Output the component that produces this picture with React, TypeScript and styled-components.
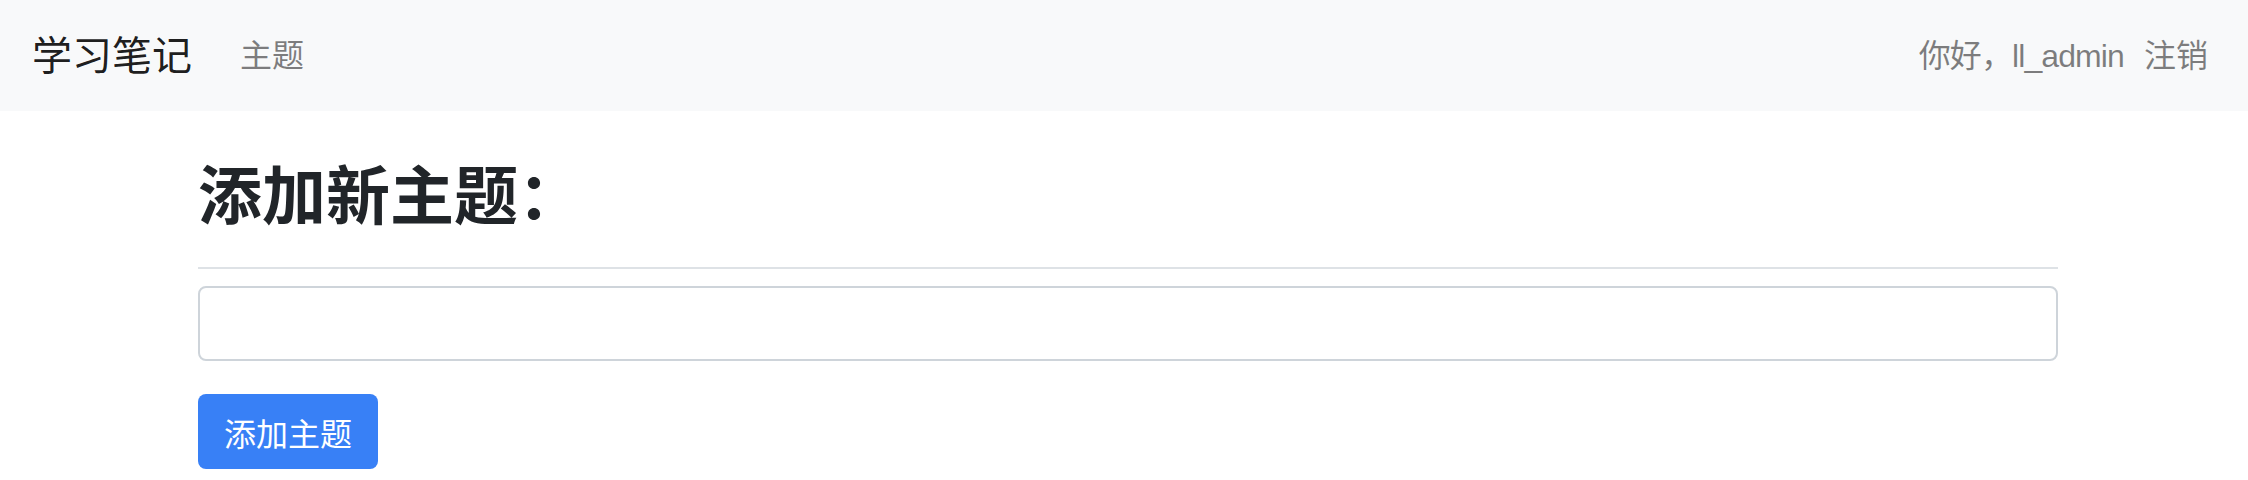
import styled, { createGlobalStyle } from 'styled-components';

const GlobalStyle = createGlobalStyle`
  body {
    margin: 0;
    background: #fff;
    font-family: "Liberation Sans", "Noto Sans CJK SC", sans-serif;
    color: #212529;
  }
`;

const Navbar = styled.nav`
  height: 111px;
  background: #f8f9fa;
  display: flex;
  align-items: center;
  padding: 0 40px 0 32px;
  box-sizing: border-box;
`;

const Brand = styled.a`
  font-size: 40px;
  line-height: 60px;
  color: rgba(0, 0, 0, 0.9);
  text-decoration: none;
  margin-right: 48px;
`;

const NavLinks = styled.div<{ $right?: boolean }>`
  display: flex;
  align-items: center;
  gap: 20px;
  margin-left: ${(p) => (p.$right ? 'auto' : '0')};
`;

const NavItem = styled.a<{ $tight?: boolean }>`
  font-size: 32px;
  line-height: 48px;
  color: rgba(0, 0, 0, 0.5);
  text-decoration: none;
  letter-spacing: ${(p) => (p.$tight ? '-0.9px' : '0')};
`;

const Container = styled.main`
  width: 1860px;
  margin-left: 198px;
  padding-top: 48px;
`;

const Heading = styled.h2`
  margin: 0;
  font-size: 64px;
  line-height: 77px;
  font-weight: 700;
  color: #212529;
`;

const Divider = styled.hr`
  margin: 31px 0 17px;
  border: 0;
  border-top: 2px solid #dee2e6;
`;

const TextInput = styled.input`
  display: block;
  width: 100%;
  height: 75px;
  box-sizing: border-box;
  border: 2px solid #ced4da;
  border-radius: 8px;
  font-size: 32px;
  padding: 0 24px;
  outline: none;
`;

const Button = styled.button`
  margin-top: 33px;
  width: 180px;
  height: 75px;
  border: 0;
  border-radius: 8px;
  background: #3880f6;
  color: #fff;
  font-family: "Liberation Sans", "Noto Sans CJK SC", sans-serif;
  font-size: 32px;
  cursor: pointer;
`;

export default function App() {
  return (
    <>
      <GlobalStyle />
      <Navbar>
        <Brand href="#">学习笔记</Brand>
        <NavLinks>
          <NavItem href="#">主题</NavItem>
        </NavLinks>
        <NavLinks $right>
          <NavItem as="span" $tight>你好，ll_admin</NavItem>
          <NavItem href="#">注销</NavItem>
        </NavLinks>
      </Navbar>
      <Container>
        <Heading>添加新主题：</Heading>
        <Divider />
        <form onSubmit={(e) => e.preventDefault()}>
          <TextInput type="text" name="text" />
          <Button type="submit">添加主题</Button>
        </form>
      </Container>
    </>
  );
}
